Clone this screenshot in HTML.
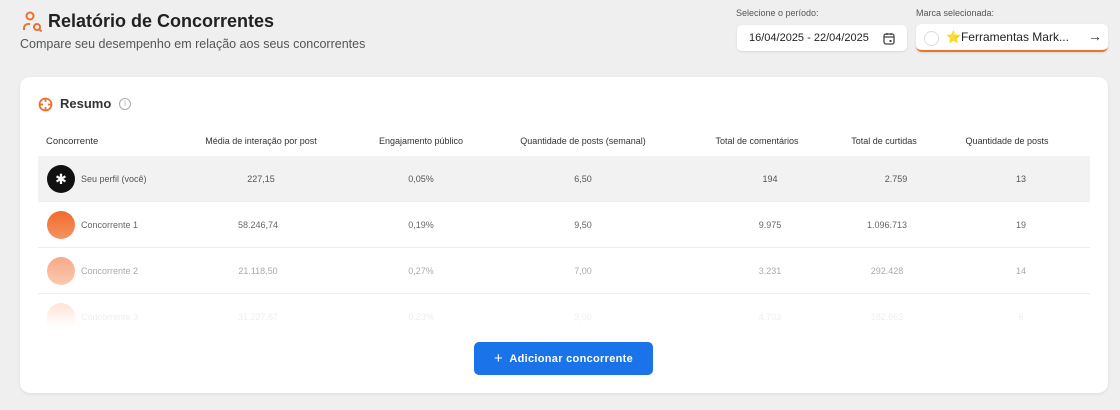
<!DOCTYPE html>
<html><head><meta charset="utf-8"><style>
*{margin:0;padding:0;box-sizing:border-box}
body{width:1120px;height:410px;background:#efefef;font-family:"Liberation Sans",sans-serif;position:relative;overflow:hidden;color:#222}
.a{position:absolute}
.card{left:20px;top:77px;width:1088px;height:316px;background:#fff;border-radius:10px;box-shadow:0 1px 3px rgba(0,0,0,.08)}
.hd{font-size:9.5px;color:#333;top:136px}
.c{transform:translateX(-50%);white-space:nowrap;font-size:9px;color:#555}
.row{left:38px;width:1052px;height:46px;border-bottom:1px solid #eee}
.av{width:28px;height:28px;border-radius:50%;left:47px}
</style></head><body>
<svg class="a" style="left:22px;top:11px" width="22" height="22" viewBox="0 0 22 22" fill="none" stroke="#f07030" stroke-width="2"><circle cx="8" cy="5" r="3.5"/><path d="M2 19v-2a4 4 0 0 1 4-4h2"/><circle cx="15" cy="16" r="3"/><path d="M17.5 18.5l2 2"/></svg>
<div class="a" style="left:48px;top:11px;font-size:18px;font-weight:bold;color:#222">Relatório de Concorrentes</div>
<div class="a" style="left:20px;top:37px;font-size:12.5px;color:#555">Compare seu desempenho em relação aos seus concorrentes</div>
<div class="a" style="left:736px;top:8px;font-size:9px;color:#555">Selecione o período:</div>
<div class="a" style="left:916px;top:8px;font-size:9px;color:#555">Marca selecionada:</div>
<div class="a" style="left:737px;top:25px;width:170px;height:26px;background:#fff;border-radius:5px;box-shadow:0 1px 2px rgba(0,0,0,.1);font-size:11px;padding:7px 0 0 12px;color:#222">16/04/2025 - 22/04/2025</div>
<svg class="a" style="left:883px;top:32px" width="12" height="13" viewBox="0 0 12 13" fill="none" stroke="#444" stroke-width="1.3"><rect x="1" y="2" width="10" height="10" rx="2"/><path d="M1 5h10M4 1v2M8 1v2"/><rect x="6.5" y="8" width="2" height="2" fill="#444" stroke="none"/></svg>
<div class="a" style="left:916px;top:24px;width:192px;height:28px;background:#fff;border-radius:6px;border-bottom:2px solid #f07030;box-shadow:0 1px 2px rgba(0,0,0,.1)"></div>
<div class="a" style="left:924px;top:31px;width:15px;height:15px;border-radius:50%;border:1px solid #ddd"></div>
<div class="a" style="left:946px;top:30px;font-size:12px;color:#222">⭐Ferramentas Mark...</div>
<div class="a" style="left:1088px;top:28px;font-size:14px;color:#333">→</div>
<div class="a card"></div>
<svg class="a" style="left:38px;top:97px" width="15" height="15" viewBox="0 0 15 15" fill="none" stroke="#f07030" stroke-width="1.8"><circle cx="7.5" cy="7.5" r="6"/><path d="M7.5 1v4M7.5 10v4M1 7.5h4M10 7.5h4"/></svg>
<div class="a" style="left:60px;top:96px;font-size:13px;font-weight:bold;color:#333">Resumo</div>
<div class="a" style="left:119px;top:98px;width:12px;height:12px;border-radius:50%;border:1px solid #aaa;font-size:8px;color:#aaa;text-align:center;line-height:10px">i</div>
<div class="a hd" style="left:46px">Concorrente</div>
<div class="a hd c" style="left:261px;color:#333">Média de interação por post</div>
<div class="a hd c" style="left:421px;color:#333">Engajamento público</div>
<div class="a hd c" style="left:583px;color:#333">Quantidade de posts (semanal)</div>
<div class="a hd c" style="left:757px;color:#333">Total de comentários</div>
<div class="a hd c" style="left:884px;color:#333">Total de curtidas</div>
<div class="a hd c" style="left:1007px;color:#333">Quantidade de posts</div>
<div class="a row" style="top:156px;background:#f2f2f2"></div>
<div class="a row" style="top:202px"></div>
<div class="a row" style="top:248px"></div>
<div class="a av" style="top:165px;background:#111;color:#fff;font-size:14px;text-align:center;line-height:28px">✱</div>
<div class="a av" style="top:211px;background:linear-gradient(#f26a2e,#f59360)"></div>
<div class="a av" style="top:257px;background:linear-gradient(#f7a988,#fbc9b0)"></div>
<div class="a av" style="top:303px;height:24px;border-radius:14px 14px 0 0;background:linear-gradient(#fde3d6,#fff)"></div>
<div style="font-size:9px">
<div class="a" style="left:81px;top:174px;color:#555">Seu perfil (você)</div>
<div class="a c" style="left:261px;top:174px">227,15</div><div class="a c" style="left:421px;top:174px">0,05%</div><div class="a c" style="left:583px;top:174px">6,50</div><div class="a c" style="left:770px;top:174px">194</div><div class="a c" style="left:896px;top:174px">2.759</div><div class="a c" style="left:1021px;top:174px">13</div>
<div class="a" style="left:81px;top:220px;color:#666">Concorrente 1</div>
<div class="a c" style="left:258px;top:220px;color:#666">58.246,74</div><div class="a c" style="left:421px;top:220px;color:#666">0,19%</div><div class="a c" style="left:583px;top:220px;color:#666">9,50</div><div class="a c" style="left:770px;top:220px;color:#666">9.975</div><div class="a c" style="left:887px;top:220px;color:#666">1.096.713</div><div class="a c" style="left:1021px;top:220px;color:#666">19</div>
<div class="a" style="left:81px;top:266px;color:#aaa">Concorrente 2</div>
<div class="a c" style="left:258px;top:266px;color:#aaa">21.118,50</div><div class="a c" style="left:421px;top:266px;color:#aaa">0,27%</div><div class="a c" style="left:583px;top:266px;color:#aaa">7,00</div><div class="a c" style="left:770px;top:266px;color:#aaa">3.231</div><div class="a c" style="left:887px;top:266px;color:#aaa">292.428</div><div class="a c" style="left:1021px;top:266px;color:#aaa">14</div>
<div class="a" style="left:81px;top:312px;color:#eee">Concorrente 3</div>
<div class="a c" style="left:258px;top:312px;color:#eee">31.227,67</div><div class="a c" style="left:421px;top:312px;color:#eee">0,23%</div><div class="a c" style="left:583px;top:312px;color:#eee">3,00</div><div class="a c" style="left:770px;top:312px;color:#eee">4.703</div><div class="a c" style="left:887px;top:312px;color:#eee">182.663</div><div class="a c" style="left:1021px;top:312px;color:#eee">6</div>
</div>
<div class="a" style="left:474px;top:342px;width:179px;height:33px;background:#1a73e8;border-radius:5px;color:#fff;font-size:11px;font-weight:bold;text-align:center;line-height:33px;letter-spacing:.3px"><span style="font-size:15px;font-weight:normal;vertical-align:-1px">+</span>&nbsp; Adicionar concorrente</div>
</body></html>
